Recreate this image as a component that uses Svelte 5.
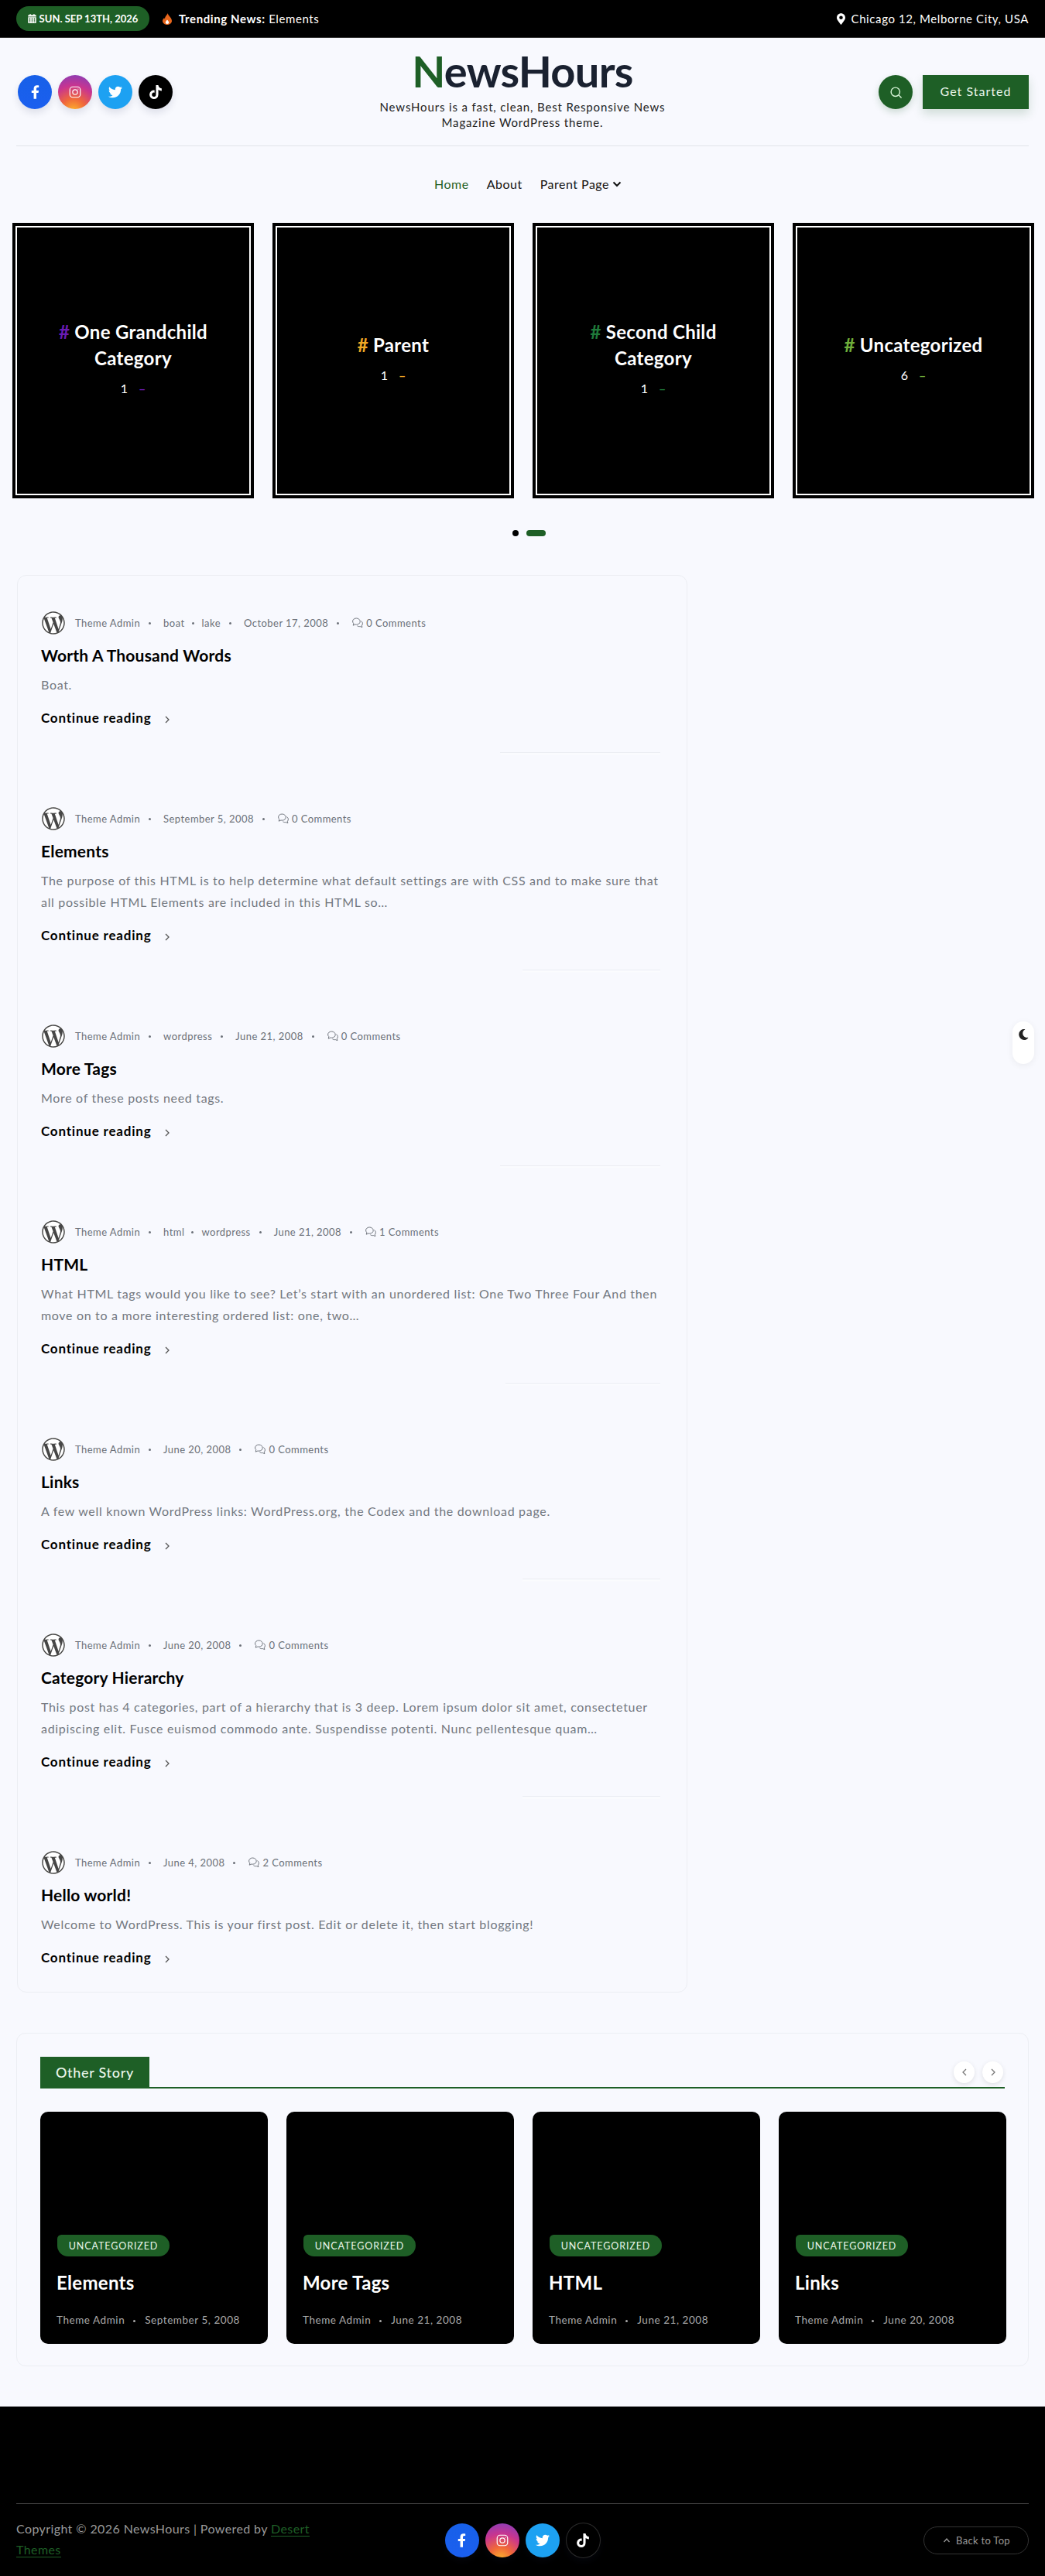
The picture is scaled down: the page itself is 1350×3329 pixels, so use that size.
<script>
  const slides = [
    { name: "One Grandchild Category", count: 1, color: "#6a1bb3" },
    { name: "Parent", count: 1, color: "#f0a825" },
    { name: "Second Child Category", count: 1, color: "#1f7a3a" },
    { name: "Uncategorized", count: 6, color: "#6fae3a" }
  ];
  const posts = [
    { cats: ["boat", "lake"], date: "October 17, 2008", comments: "0 Comments", title: "Worth A Thousand Words", text: "Boat.", sep: 207 },
    { cats: [], date: "September 5, 2008", comments: "0 Comments", title: "Elements", text: "The purpose of this HTML is to help determine what default settings are with CSS and to make sure that all possible HTML Elements are included in this HTML so…", sep: 178 },
    { cats: ["wordpress"], date: "June 21, 2008", comments: "0 Comments", title: "More Tags", text: "More of these posts need tags.", sep: 207 },
    { cats: ["html", "wordpress"], date: "June 21, 2008", comments: "1 Comments", title: "HTML", text: "What HTML tags would you like to see? Let’s start with an unordered list: One Two Three Four And then move on to a more interesting ordered list: one, two…", sep: 200 },
    { cats: [], date: "June 20, 2008", comments: "0 Comments", title: "Links", text: "A few well known WordPress links: WordPress.org, the Codex and the download page.", sep: 178 },
    { cats: [], date: "June 20, 2008", comments: "0 Comments", title: "Category Hierarchy", text: "This post has 4 categories, part of a hierarchy that is 3 deep. Lorem ipsum dolor sit amet, consectetuer adipiscing elit. Fusce euismod commodo ante. Suspendisse potenti. Nunc pellentesque quam…", sep: 178 },
    { cats: [], date: "June 4, 2008", comments: "2 Comments", title: "Hello world!", text: "Welcome to WordPress. This is your first post. Edit or delete it, then start blogging!", sep: 0 }
  ];
  const stories = [
    { title: "Elements", date: "September 5, 2008" },
    { title: "More Tags", date: "June 21, 2008" },
    { title: "HTML", date: "June 21, 2008" },
    { title: "Links", date: "June 20, 2008" }
  ];
</script>

{#snippet socials(footer)}
  <div class="socials">
    <span class="soc fb">
      <svg viewBox="0 0 320 512" width="11" height="18"><path fill="#fff" d="M279 288l14-93h-89v-60c0-25 12-50 52-50h41V6s-37-6-72-6c-73 0-121 44-121 125v70H23v93h81v224h100V288z" /></svg>
    </span>
    <span class="soc ig">
      <svg viewBox="0 0 24 24" width="18" height="18" fill="none" stroke="#fff" stroke-width="1.6"><rect x="3" y="3" width="18" height="18" rx="5" /><circle cx="12" cy="12" r="4.2" /><circle cx="17.2" cy="6.8" r="0.8" fill="#fff" stroke="none" /></svg>
    </span>
    <span class="soc tw">
      <svg viewBox="0 0 512 512" width="18" height="18"><path fill="#fff" d="M459 152c.3 4.500.3 9.100.3 13.600 0 138.700-105.600 298.600-298.600 298.600-59.500 0-114.700-17.200-161.100-47.100 8.400 1 16.600 1.300 25.300 1.300 49.100 0 94.200-16.600 130.300-44.800-46.100-1-84.800-31.200-98.100-72.800 6.500 1 13 1.600 19.800 1.600 9.400 0 18.800-1.300 27.600-3.600-48.100-9.700-84.100-52-84.100-103v-1.300c14 7.800 30.200 12.700 47.400 13.300-28.300-18.800-46.800-51-46.800-87.400 0-19.500 5.200-37.400 14.300-53 51.700 63.700 129.300 105.300 216.400 109.800-1.600-7.800-2.600-15.900-2.600-24 0-57.800 46.800-104.900 104.900-104.900 30.200 0 57.500 12.700 76.700 33.100 23.700-4.500 46.500-13.300 66.600-25.300-7.800 24-24.400 44.200-46.100 57.200 21.100-2.300 41.600-8.100 60.400-16.200-14.300 20.800-32.200 39.300-52.600 54.300z" /></svg>
    </span>
    <span class="soc tt" class:ring={footer}>
      <svg viewBox="0 0 448 512" width="16" height="18"><path fill="#fff" d="M448 209.900a210.100 210.100 0 0 1-122.800-39.300v178.800A162.600 162.600 0 1 1 185 188.300v89.900a74.600 74.600 0 1 0 52.200 71.200V0h88a121.200 121.200 0 0 0 1.900 22.200A122.200 122.200 0 0 0 381 102.400a121.400 121.400 0 0 0 67 20.100z" /></svg>
    </span>
  </div>
{/snippet}

{#snippet chevron(points)}
  <svg viewBox="0 0 12 12" width="12" height="12" fill="none" stroke="currentColor" stroke-width="1.3"><path d={points} /></svg>
{/snippet}

<div class="topbar">
  <div class="top-left">
    <span class="date">
      <svg viewBox="0 0 448 512" width="11" height="12"><path fill="#fff" d="M96 0v48H48C22 48 0 70 0 96v48h448V96c0-26-22-48-48-48h-48V0h-48v48H144V0zM0 176v288c0 26 22 48 48 48h352c26 0 48-22 48-48V176zm64 48h64v56H64zm128 0h64v56h-64zm128 0h64v56h-64zM64 312h64v56H64zm128 0h64v56h-64zm128 0h64v56h-64zM64 400h64v56H64zm128 0h64v56h-64zm128 0h64v56h-64z" /></svg>
      SUN. SEP 13TH, 2026
    </span>
    <svg class="fire" viewBox="0 0 384 512" width="12" height="16"><path fill="#e8661c" d="M216 24c0 60-120 130-120 250 0 20-18-30-24-50C30 260 0 310 0 352c0 88 86 160 192 160s192-72 192-160C384 210 216 130 216 24z" /><path fill="#fff" d="M192 300c-40 50-70 80-70 115 0 38 32 62 70 62s70-24 70-62c0-35-30-65-70-115z" /></svg>
    <span class="trend"><b>Trending News:</b> Elements</span>
  </div>
  <div class="loc">
    <svg viewBox="0 0 384 512" width="11" height="15"><path fill="#fff" fill-rule="evenodd" d="M192 0C86 0 0 86 0 192c0 77 27 99 172 310 10 14 30 14 40 0 145-211 172-233 172-310C384 86 298 0 192 0zm0 272a80 80 0 1 1 0-160 80 80 0 0 1 0 160z" /></svg>
    Chicago 12, Melborne City, USA
  </div>
</div>

<header class="masthead">
  <div class="head-row">
    <div class="head-side">{@render socials(false)}</div>
    <div class="brand">
      <h1><span>N</span>ewsHours</h1>
      <p>NewsHours is a fast, clean, Best Responsive News Magazine WordPress theme.</p>
    </div>
    <div class="head-side right">
      <span class="search">
        <svg viewBox="0 0 24 24" width="17" height="17" fill="none" stroke="#d8f5d8" stroke-width="2"><circle cx="11" cy="11" r="8" /><path d="M17 17l5 5" /></svg>
      </span>
      <span class="cta">Get Started</span>
    </div>
  </div>
  <nav>
    <span class="active">Home</span>
    <span>About</span>
    <span class="parent">Parent Page
      <svg viewBox="0 0 12 12" width="12" height="12" fill="none" stroke="#111" stroke-width="2"><path d="M1.500 3.500L6 8l4.500-4.500" /></svg>
    </span>
  </nav>
</header>

<section class="slides">
  {#each slides as s}
    <div class="slide">
      <div class="slide-in">
        <h3><i style="color:{s.color}">#</i> {s.name}</h3>
        <div class="num">{s.count} <i style="color:{s.color}">–</i></div>
      </div>
    </div>
  {/each}
</section>
<div class="dots"><span></span><span class="on"></span></div>

<main class="posts">
  {#each posts as p}
    <article>
      <div class="meta">
        <svg class="avatar" viewBox="-1 -1 26 26" width="32" height="32">
          <circle cx="12" cy="12" r="12.500" fill="#fff" />
          <path fill="#464646" d="M21.469 6.825c.84 1.537 1.318 3.3 1.318 5.175 0 3.979-2.156 7.456-5.363 9.325l3.295-9.527c.615-1.54.82-2.771.82-3.864 0-.405-.026-.78-.07-1.11m-7.981.105c.647-.03 1.232-.105 1.232-.105.582-.075.514-.93-.067-.899 0 0-1.755.135-2.88.135-1.064 0-2.85-.15-2.85-.15-.585-.03-.661.855-.075.885 0 0 .54.061 1.125.09l1.68 4.605-2.37 7.08L5.354 6.9c.649-.03 1.234-.1 1.234-.1.585-.075.516-.93-.065-.896 0 0-1.746.138-2.874.138-.2 0-.438-.008-.69-.015C4.911 3.15 8.235 1.215 12 1.215c2.809 0 5.365 1.072 7.286 2.833-.046-.003-.091-.009-.141-.009-1.06 0-1.812.923-1.812 1.914 0 .89.513 1.643 1.06 2.531.411.72.89 1.643.89 2.977 0 .915-.354 1.994-.821 3.479l-1.075 3.585-3.9-11.61.001.014zM12 22.784c-1.059 0-2.081-.153-3.048-.437l3.237-9.406 3.315 9.087c.024.053.05.101.078.149-1.12.393-2.325.609-3.582.609M1.211 12c0-1.564.336-3.05.935-4.39L7.29 21.709C3.694 19.96 1.212 16.271 1.212 12M12 0C5.385 0 0 5.385 0 12s5.385 12 12 12 12-5.385 12-12S18.615 0 12 0" />
        </svg>
        <span class="m-item">Theme Admin</span>
        {#if p.cats.length}
          <span class="m-cats">
            {#each p.cats as c}<span class="dot-b">{c}</span>{/each}
          </span>
        {/if}
        <span class="m-item dot-b">{p.date}</span>
        <span class="m-item dot-b com">
          <svg viewBox="0 0 20 20" width="16" height="16" fill="none" stroke="#6b7078" stroke-width="1.200"><path d="M8 2.500c-3.500 0-6 2.200-6 5 0 1.300.6 2.400 1.500 3.300L2.800 14l3.400-1.500c.6.100 1.200.2 1.800.2 3.500 0 6-2.200 6-5s-2.500-5.200-6-5.200z" /><path d="M15.500 7c1.500.9 2.500 2.300 2.500 4 0 1.200-.5 2.300-1.300 3.100l.6 3-3.200-1.400c-1.700.3-3.500 0-4.800-1" /></svg>
          {p.comments}
        </span>
      </div>
      <h2>{p.title}</h2>
      <p class="excerpt">{p.text}</p>
      <div class="more">Continue reading <span class="arr">{@render chevron("M4 2l4 4-4 4")}</span></div>
      {#if p.sep}<div class="sep" style="width:{p.sep}px"></div>{/if}
    </article>
  {/each}
</main>

<section class="other">
  <div class="other-head">
    <h4>Other Story</h4>
    <div class="arrows">
      <span>{@render chevron("M8 2L4 6l4 4")}</span>
      <span>{@render chevron("M4 2l4 4-4 4")}</span>
    </div>
  </div>
  <div class="stories">
    {#each stories as s}
      <div class="story">
        <span class="badge">UNCATEGORIZED</span>
        <h5>{s.title}</h5>
        <div class="s-meta"><span>Theme Admin</span><span class="dot-c">{s.date}</span></div>
      </div>
    {/each}
  </div>
</section>

<button class="mode" aria-label="Dark mode">
  <svg viewBox="0 0 512 512" width="14" height="14"><path fill="#222" d="M283 512c79 0 151-36 199-95 7-9-1-22-12-20-127 24-243-73-243-201 0-74 39-141 103-178 10-6 7-21-4-23A256 256 0 0 0 283 512z" /></svg>
</button>

<footer>
  <div class="foot-row">
    <p class="copy">Copyright © 2026 NewsHours | Powered by <a href="#top">Desert Themes</a></p>
    {@render socials(true)}
    <div class="foot-end">
      <span class="back">{@render chevron("M2.500 8L6 4l3.500 4")} Back to Top</span>
    </div>
  </div>
</footer>

<style>
  :global(body) {
    background: #f8f9fe;
    color: #111;
    font-family: "Lato", "Open Sans", sans-serif;
  }
  * {
    box-sizing: border-box;
  }
  h1, h2, h3, h4, h5, p {
    margin: 0;
  }
  i {
    font-style: normal;
  }

  .topbar {
    height: 49px;
    background: #000;
    border-bottom: 1px solid #333;
    padding: 0 21px;
    display: flex;
    justify-content: space-between;
    align-items: center;
    color: #fff;
    font-size: 15px;
  }
  .top-left,
  .loc {
    display: flex;
    align-items: center;
  }
  .date {
    width: 172px;
    height: 32px;
    margin-top: -1px;
    border-radius: 16px;
    background: #1e5f26;
    display: flex;
    align-items: center;
    justify-content: center;
    gap: 4px;
    font-size: 13px;
    font-weight: 700;
    white-space: nowrap;
  }
  .fire {
    margin: 0 9px 0 17px;
  }
  .trend {
    letter-spacing: 0.6px;
  }
  .trend b {
    font-weight: 700;
  }
  .loc {
    gap: 8px;
    letter-spacing: 0.6px;
  }

  .masthead {
    padding: 0 21px;
  }
  .head-row {
    height: 140px;
    border-bottom: 1px solid #e2e4ea;
    display: grid;
    grid-template-columns: 1fr 400px 1fr;
  }
  .head-side {
    padding: 48px 0 0 2px;
  }
  .head-side.right {
    display: flex;
    justify-content: flex-end;
    gap: 13px;
    padding: 48px 0 0;
  }
  .socials {
    display: flex;
    gap: 8px;
  }
  .soc {
    width: 44px;
    height: 44px;
    border-radius: 50%;
    display: flex;
    align-items: center;
    justify-content: center;
    box-shadow: 0 5px 10px rgba(30, 40, 80, 0.12);
  }
  .fb {
    background: linear-gradient(#1760e8, #1b5fef);
  }
  .ig {
    background: radial-gradient(circle at 45% 105%, #fdb42c 0, #f0683a 30%, #c9358f 62%, #7b3fc0 100%);
  }
  .tw {
    background: #1da1f2;
  }
  .tt {
    background: #000;
  }
  .tt.ring {
    border: 1px solid #2c2c2c;
    width: 45px;
    height: 46px;
    margin-top: -1px;
  }
  .brand {
    text-align: center;
    padding-top: 12px;
  }
  h1 {
    font-size: 56px;
    line-height: 62px;
    font-weight: 700;
    color: #1a2130;
    letter-spacing: -0.7px;
  }
  h1 span {
    color: #1e5f26;
  }
  .brand p {
    font-size: 15px;
    line-height: 20px;
    color: #222;
    letter-spacing: 0.85px;
    padding: 0 2px;
    margin-top: 5px;
  }
  .search {
    width: 44px;
    height: 44px;
    border-radius: 50%;
    background: #1e5f26;
    display: flex;
    align-items: center;
    justify-content: center;
    box-shadow: 0 4px 10px rgba(30, 95, 38, 0.2);
  }
  .cta {
    width: 137px;
    height: 44px;
    padding-bottom: 3px;
    background: #1e5f26;
    color: #eaf6ea;
    display: flex;
    align-items: center;
    justify-content: center;
    font-size: 16px;
    letter-spacing: 1px;
    box-shadow: 0 6px 12px rgba(30, 95, 38, 0.18);
  }
  nav {
    height: 98px;
    padding: 0 0 1px 14px;
    display: flex;
    justify-content: center;
    align-items: center;
    gap: 23px;
    font-size: 16px;
    letter-spacing: 0.5px;
  }
  nav .active {
    color: #1e5f26;
  }
  .parent {
    display: flex;
    align-items: center;
    gap: 4px;
  }

  .slides {
    margin-top: 1px;
    padding: 0 16px;
    display: flex;
    gap: 24px;
  }
  .slide {
    width: 312px;
    height: 356px;
    background: #000;
    padding: 4px;
    flex: none;
  }
  .slide-in {
    height: 100%;
    border: 2px solid #fff;
    color: #fff;
    display: flex;
    flex-direction: column;
    align-items: center;
    justify-content: center;
    text-align: center;
    padding: 0 30px 7px;
  }
  .slide h3 {
    font-size: 24px;
    line-height: 34px;
    font-weight: 700;
    letter-spacing: 0.3px;
  }
  .num {
    margin-top: 11px;
    font-size: 16px;
    line-height: 22px;
    word-spacing: 10px;
  }
  .num i {
    font-weight: 700;
  }
  .dots {
    height: 8px;
    margin: 41px 0 0;
    display: flex;
    justify-content: center;
    gap: 10px;
    padding-left: 16px;
  }
  .dots span {
    width: 8px;
    height: 8px;
    border-radius: 4px;
    background: #000;
  }
  .dots .on {
    width: 25px;
    background: #1e5f26;
  }

  .posts {
    width: 866px;
    margin: 50px 0 0 22px;
    padding: 1px 30px 30px;
    border: 1px solid #eceef3;
    border-radius: 12px;
  }
  article {
    padding-top: 44px;
  }
  .meta {
    height: 32px;
    display: flex;
    align-items: center;
    font-size: 13px;
    color: #6b7078;
    letter-spacing: 0.45px;
  }
  .avatar {
    margin-right: 12px;
    flex: none;
  }
  .m-cats {
    display: flex;
  }
  .dot-b {
    display: inline-flex;
    align-items: center;
    gap: 3px;
  }
  .dot-b::before {
    content: "";
    width: 3px;
    height: 3px;
    border-radius: 50%;
    background: #6b7078;
    margin: 0 13px 0 11px;
  }
  .m-cats .dot-b:nth-child(2)::before {
    margin: 0 7px 0 9px;
  }
  h2 {
    font-size: 21px;
    line-height: 28px;
    font-weight: 700;
    color: #000;
    margin-top: 12px;
    letter-spacing: 0.2px;
  }
  .excerpt {
    margin-top: 10px;
    font-size: 16px;
    line-height: 28px;
    color: #737880;
    letter-spacing: 0.68px;
  }
  .more {
    margin-top: 15px;
    height: 28px;
    font-size: 17px;
    font-weight: 700;
    line-height: 28px;
    color: #000;
    display: flex;
    align-items: center;
    letter-spacing: 0.8px;
  }
  .arr {
    display: flex;
    margin: 3px 0 0 15px;
    color: #555;
  }
  .sep {
    height: 1px;
    background: #eceef3;
    box-shadow: 0 2px 2px #fff;
    margin: 30px 4px 25px auto;
  }

  .other {
    width: 1308px;
    height: 431px;
    margin: 52px 0 0 21px;
    padding: 30px 30px 0;
    border: 1px solid #eceef3;
    border-radius: 12px;
  }
  .other-head {
    height: 41px;
    border-bottom: 2px solid #1e5f26;
    display: flex;
    justify-content: space-between;
  }
  h4 {
    width: 141px;
    height: 41px;
    background: #1e5f26;
    color: #eaf6ea;
    font-size: 18px;
    font-weight: 500;
    line-height: 40px;
    text-align: center;
    letter-spacing: 0.7px;
  }
  .arrows {
    display: flex;
    gap: 10px;
    padding: 6px 2px 0 0;
  }
  .arrows span {
    width: 27px;
    height: 28px;
    border-radius: 50%;
    background: #fff;
    color: #777;
    display: flex;
    align-items: center;
    justify-content: center;
    box-shadow: 0 2px 6px rgba(0, 0, 0, 0.1);
  }
  .stories {
    margin-top: 30px;
    display: grid;
    grid-template-columns: repeat(4, 294px);
    gap: 24px;
  }
  .story {
    height: 300px;
    background: #000;
    border-radius: 10px;
    padding: 0 21px 19px;
    color: #fff;
    display: flex;
    flex-direction: column;
    justify-content: flex-end;
    align-items: flex-start;
  }
  .badge {
    width: 145px;
    height: 28px;
    margin-left: 1px;
    border-radius: 6px 16px 16px 16px;
    background: #1e5f26;
    color: #eaf6ea;
    display: flex;
    align-items: center;
    justify-content: center;
    font-size: 12.5px;
    letter-spacing: 0.9px;
  }
  h5 {
    margin-top: 17px;
    font-size: 24px;
    line-height: 34px;
    font-weight: 700;
    letter-spacing: 0.3px;
  }
  .s-meta {
    margin-top: 19px;
    height: 24px;
    display: flex;
    align-items: center;
    font-size: 13.5px;
    color: #aaa;
    letter-spacing: 0.55px;
  }
  .dot-c::before {
    content: "";
    display: inline-block;
    width: 3px;
    height: 3px;
    border-radius: 50%;
    background: #aaa;
    vertical-align: middle;
    margin: 0 12px 0 11px;
  }

  .mode {
    position: absolute;
    left: 1308px;
    top: 1320px;
    width: 28px;
    height: 55px;
    padding: 10px 0 0;
    border: 0;
    border-radius: 14px;
    background: #fff;
    display: flex;
    justify-content: center;
    align-items: flex-start;
    box-shadow: 0 2px 10px rgba(0, 0, 0, 0.06);
  }

  footer {
    margin-top: 52px;
    height: 220px;
    background: #000;
    padding: 125px 21px 0;
  }
  .foot-row {
    border-top: 1px solid #444;
    padding-top: 20px;
    display: grid;
    grid-template-columns: 1fr auto 1fr;
    align-items: start;
  }
  .copy {
    width: 390px;
    font-size: 16px;
    line-height: 27px;
    color: #999;
    letter-spacing: 0.4px;
    margin-top: -2px;
  }
  .copy a {
    color: #1e5f26;
    text-decoration: none;
    border-bottom: 1px solid #1e5f26;
  }
  .foot-row .socials {
    margin: 5px 0 0;
  }
  .foot-end {
    display: flex;
    justify-content: flex-end;
    padding-top: 9px;
  }
  .back {
    width: 136px;
    height: 36px;
    border: 1px solid #333;
    border-radius: 18px;
    color: #999;
    font-size: 13px;
    letter-spacing: 0.3px;
    display: flex;
    align-items: center;
    justify-content: center;
    gap: 6px;
  }
</style>
